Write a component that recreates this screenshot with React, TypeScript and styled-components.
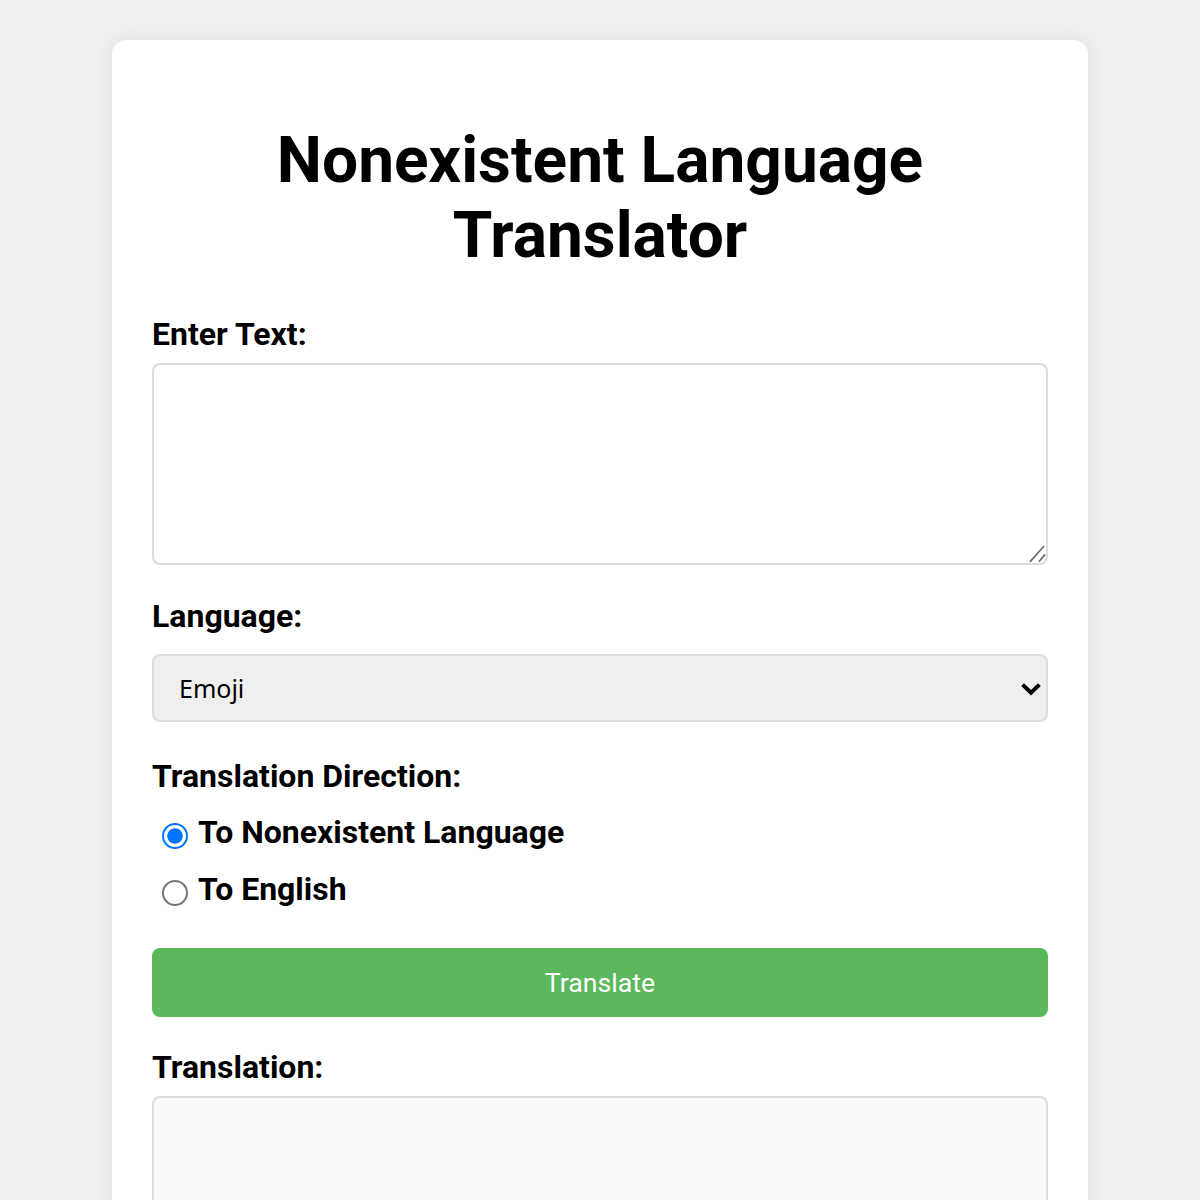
import React, { useState } from "react";
import styled, { createGlobalStyle } from "styled-components";

const Global = createGlobalStyle`
  html, body { margin: 0; padding: 0; background: #f0f0f0; }
  body { font-family: Roboto, "Liberation Sans", sans-serif; color: #000; }
  * { box-sizing: border-box; }
`;

/* The reference is rendered at a 2x scale: zoom the whole page so that
   native controls scale with it. */
const Page = styled.div`
  zoom: 2;
  padding-top: 20px;
`;

const Card = styled.div`
  width: 488px;
  margin: 0 auto;
  background: #fff;
  border-radius: 7px;
  box-shadow: 0 0 10px rgba(0, 0, 0, 0.08);
  padding: 20px;
`;

const Title = styled.h1`
  font-size: 32px;
  font-weight: 700;
  text-align: center;
  line-height: 37.5px;
  margin: 21.4px 0;
`;

const Label = styled.label<{ $mb: number }>`
  display: block;
  font-size: 16px;
  font-weight: 700;
  line-height: 18.75px;
  margin-bottom: ${(p) => p.$mb}px;
`;

const Field = styled.div<{ $mb: number }>`
  position: relative;
  margin-bottom: ${(p) => p.$mb}px;
`;

const TextInput = styled.textarea`
  display: block;
  width: 100%;
  height: 101px;
  border: 1px solid #dcdcdc;
  border-radius: 4px;
  margin: 0;
  padding: 6px;
  font-family: Roboto, sans-serif;
  font-size: 13px;
  background: #fff;
  resize: none;
`;

const Grip = styled.svg`
  position: absolute;
  right: 0;
  bottom: 0.5px;
  width: 10px;
  height: 10px;
  pointer-events: none;
`;

const Select = styled.select`
  display: block;
  width: 100%;
  height: 34px;
  margin: 0;
  padding: 0 20px 0 12.5px;
  border: 1px solid #dcdcdc;
  border-radius: 4px;
  background-color: #efefef;
  font-family: "Noto Sans", sans-serif;
  font-size: 12.5px;
  color: #000;
  appearance: none;
  -webkit-appearance: none;
`;

const Chevron = styled.svg`
  position: absolute;
  right: 3px;
  top: 14px;
  width: 11px;
  height: 7px;
  pointer-events: none;
`;

const RadioList = styled.div`
  display: flex;
  flex-direction: column;
  margin-bottom: 14.8px;
`;

const RadioRow = styled.label`
  display: flex;
  align-items: center;
  height: 28.7px;
  font-size: 16px;
  font-weight: 700;
  line-height: 18.75px;
  cursor: pointer;
`;

const Radio = styled.input`
  width: 13px;
  height: 13px;
  margin: 3px 5px 0 5px;
  flex: none;
`;

const TranslateButton = styled.button`
  display: block;
  width: 100%;
  height: 34.5px;
  border: none;
  border-radius: 4px;
  background: #5cb85c;
  color: #fff;
  font-family: Roboto, sans-serif;
  font-size: 13.333px;
  font-weight: 400;
  margin-bottom: 15.8px;
  cursor: pointer;
`;

const Output = styled.div`
  width: 100%;
  min-height: 101px;
  border: 1px solid #dcdcdc;
  border-radius: 4px;
  background: #f9f9f9;
`;

export default function App() {
  const [dir, setDir] = useState("to");
  return (
    <>
      <Global />
      <Page>
        <Card>
          <Title>Nonexistent Language Translator</Title>
          <Label $mb={5} htmlFor="input">Enter Text:</Label>
          <Field $mb={16.5}>
            <TextInput id="input" />
            <Grip viewBox="0 0 10 10">
              <path d="M1 8.9 L8 1 M5.5 8.9 L8.5 5.2" stroke="#6f6f6f" strokeWidth="0.9" fill="none" />
            </Grip>
          </Field>
          <Label $mb={9.4} htmlFor="lang">Language:</Label>
          <Field $mb={17.8}>
            <Select id="lang" defaultValue="emoji">
              <option value="emoji">Emoji</option>
              <option value="pig">Pig Latin</option>
              <option value="klingon">Klingon</option>
            </Select>
            <Chevron viewBox="0 0 11 7">
              <path d="M1.3 1.3 L5.5 5.4 L9.7 1.3" stroke="#000" strokeWidth="2" fill="none" />
            </Chevron>
          </Field>
          <Label $mb={4.2}>Translation Direction:</Label>
          <RadioList>
            <RadioRow>
              <Radio type="radio" name="dir" checked={dir === "to"} onChange={() => setDir("to")} />
              To Nonexistent Language
            </RadioRow>
            <RadioRow>
              <Radio type="radio" name="dir" checked={dir === "en"} onChange={() => setDir("en")} />
              To English
            </RadioRow>
          </RadioList>
          <TranslateButton>Translate</TranslateButton>
          <Label $mb={5}>Translation:</Label>
          <Output />
        </Card>
      </Page>
    </>
  );
}
